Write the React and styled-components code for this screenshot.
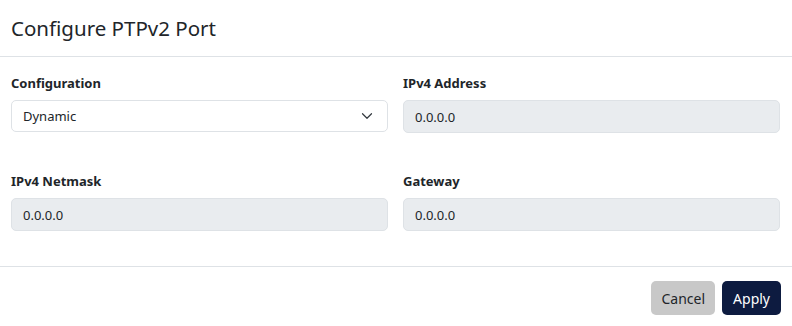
import React from "react";
import styled, { createGlobalStyle } from "styled-components";

const Global = createGlobalStyle`
  html, body { margin: 0; padding: 0; background: #fff; }
  body { font-family: "Noto Sans", "Open Sans", sans-serif; color: #212529; }
  * { box-sizing: border-box; }
`;

const Modal = styled.div`
  width: 792px;
  height: 326px;
  background: #fff;
  display: flex;
  flex-direction: column;
`;

const Header = styled.div`
  height: 57px;
  padding: 0 11px;
  display: flex;
  align-items: center;
  border-bottom: 1px solid #dee2e6;
`;

const Title = styled.h1`
  margin: 0;
  font-size: 20.5px;
  font-weight: 400;
  line-height: 24px;
  color: #212529;
`;

const Body = styled.div`
  height: 210px;
  padding: 16px 12px 0 11px;
  display: grid;
  grid-template-columns: 1fr 1fr;
  column-gap: 15px;
  row-gap: 38px;
  align-content: start;
  border-bottom: 1px solid #dee2e6;
`;

const Field = styled.div`
  display: flex;
  flex-direction: column;
`;

const Label = styled.label`
  font-size: 13px;
  font-weight: 700;
  line-height: 20px;
  margin-bottom: 7px;
  color: #212529;
`;

const Control = styled.div`
  height: ${(p) => (p.$disabled ? "33px" : "32px")};
  border: 1px solid #dee2e6;
  border-radius: 5px;
  padding: 0 14px 0 11px;
  display: flex;
  align-items: center;
  justify-content: space-between;
  font-size: 13px;
  color: #212529;
  background: ${(p) => (p.$disabled ? "#e9ecef" : "#fff")};
`;

const Footer = styled.div`
  flex: 1;
  padding: 14px 11px 0;
  display: flex;
  justify-content: flex-end;
  align-items: flex-start;
  gap: 7px;
`;

const Button = styled.button`
  height: 34px;
  padding: 0 ${(p) => (p.$primary ? "11px" : "10px")};
  border: none;
  border-radius: 5px;
  font-family: inherit;
  font-size: 14px;
  color: ${(p) => (p.$primary ? "#fff" : "#212529")};
  background: ${(p) => (p.$primary ? "#0d1b40" : "#c8c8c8")};
`;

const Chevron = () => (
  <svg width="12" height="12" viewBox="0 0 16 16" fill="none">
    <path d="M2 5l6 6 6-6" stroke="#343a40" strokeWidth="1.6" strokeLinecap="round" strokeLinejoin="round" />
  </svg>
);

export default function App() {
  return (
    <Modal>
      <Global />
      <Header>
        <Title>Configure PTPv2 Port</Title>
      </Header>
      <Body>
        <Field>
          <Label>Configuration</Label>
          <Control>
            <span>Dynamic</span>
            <Chevron />
          </Control>
        </Field>
        <Field>
          <Label>IPv4 Address</Label>
          <Control $disabled>0.0.0.0</Control>
        </Field>
        <Field>
          <Label>IPv4 Netmask</Label>
          <Control $disabled>0.0.0.0</Control>
        </Field>
        <Field>
          <Label>Gateway</Label>
          <Control $disabled>0.0.0.0</Control>
        </Field>
      </Body>
      <Footer>
        <Button>Cancel</Button>
        <Button $primary>Apply</Button>
      </Footer>
    </Modal>
  );
}
